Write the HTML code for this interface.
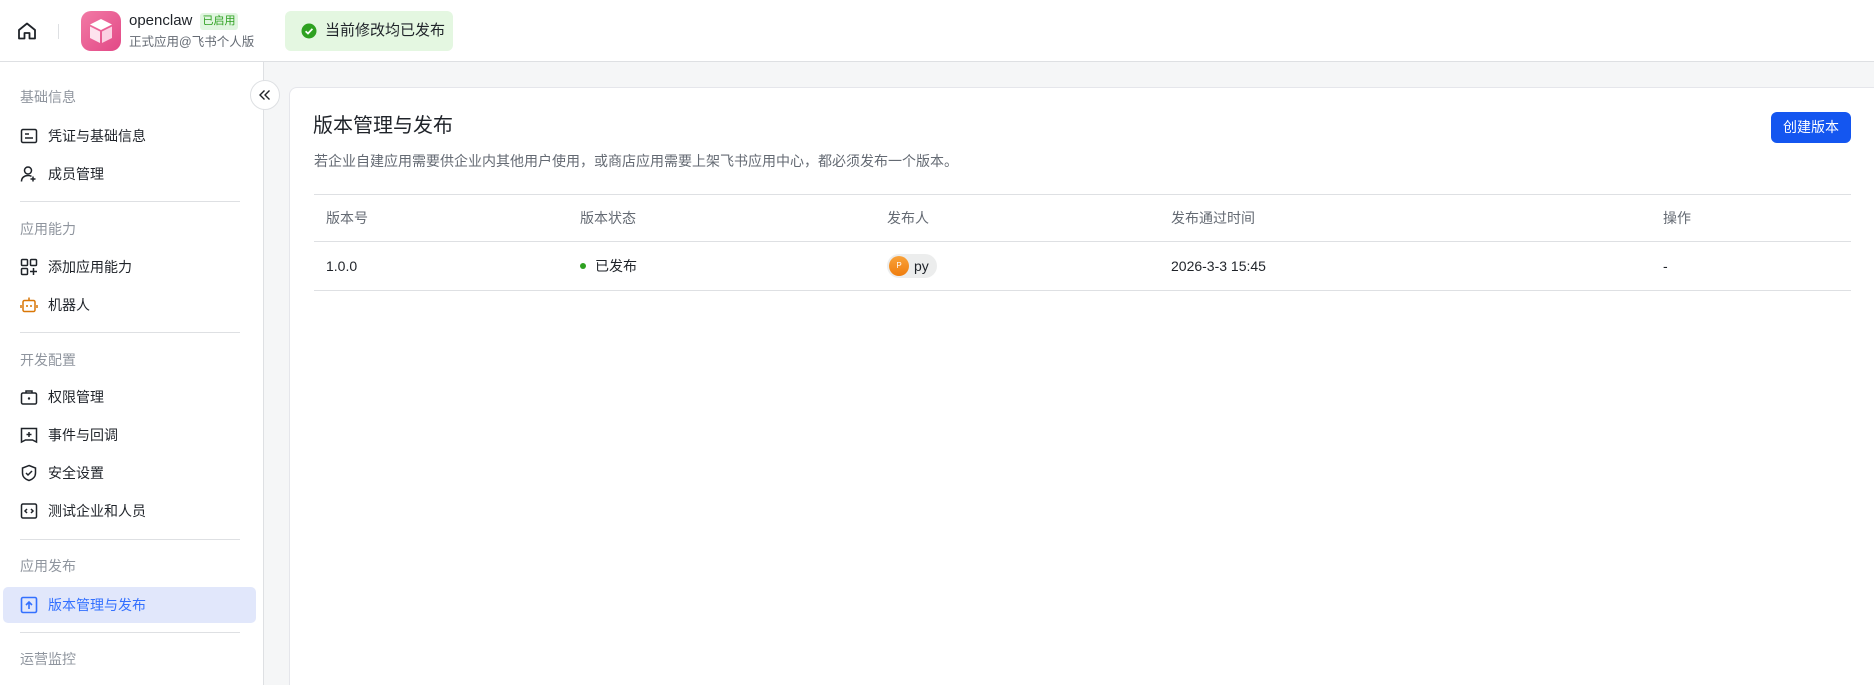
<!DOCTYPE html>
<html style="overflow:hidden;width:1874px;height:685px"><head><meta charset="utf-8"><style>
*{box-sizing:border-box;margin:0;padding:0}
body{width:1874px;height:685px;overflow:hidden;background:#f5f6f7;font-family:"Liberation Sans","Noto Sans CJK SC",sans-serif;color:#1f2329;position:relative}
.abs{position:absolute}
.hdr{left:0;top:0;width:1874px;height:62px;background:#fff;border-bottom:1px solid #dee0e3}
.side{left:0;top:62px;width:264px;height:623px;background:#fff;border-right:1px solid #dee0e3}
.sec{position:absolute;left:20px;font-size:14px;color:#8f959e;line-height:20px}
.it{position:absolute;left:48px;font-size:14px;color:#1f2329;line-height:20px}
.ic{position:absolute;left:20px;width:18px;height:18px}
.dv{position:absolute;left:20px;width:220px;height:1px;background:#dee0e3}
.card{left:289px;top:87px;width:1600px;height:598px;background:#fff;border:1px solid #e5e6eb;border-bottom:none;border-radius:8px 8px 0 0}
.th{position:absolute;top:208px;font-size:14px;color:#646a73;line-height:20px}
.td{position:absolute;top:256px;font-size:14px;color:#1f2329;line-height:20px}
.ln{position:absolute;left:314px;width:1537px;height:1px;background:#dee0e3}
</style></head><body>
<div class="abs hdr">
  <svg class="abs" style="left:17px;top:22px" width="20" height="18" viewBox="0 0 20 18"><path d="M2 8 L10 1.5 L18 8 V16.5 H12.5 V11 H7.5 V16.5 H2 Z" fill="none" stroke="#1f2329" stroke-width="1.8" stroke-linejoin="round"/></svg>
  <div class="abs" style="left:58px;top:24px;width:1px;height:15px;background:#dee0e3"></div>
  <div class="abs" style="left:81px;top:11px;width:40px;height:40px;border-radius:10px;background:linear-gradient(135deg,#f27aa5,#e24886)">
    <svg width="40" height="40" viewBox="0 0 40 40"><path d="M20 8 L31 13.5 L20 19 L9 13.5Z" fill="#fff"/><path d="M9 15.5 L19 20.5 V32 L9 27Z" fill="#fde3ee"/><path d="M31 15.5 L21 20.5 V32 L31 27Z" fill="#fbd0e2"/></svg>
  </div>
  <div class="abs" style="left:129px;top:11px;font-size:15px;line-height:20px;color:#1f2329">openclaw</div>
  <div class="abs" style="left:200px;top:13px;width:38px;height:17px;background:#e0f5df;border-radius:3px;color:#2ea121;font-size:11px;line-height:17px;text-align:center">已启用</div>
  <div class="abs" style="left:129px;top:33px;font-size:12.5px;line-height:18px;color:#646a73">正式应用@飞书个人版</div>
  <div class="abs" style="left:285px;top:11px;width:168px;height:40px;background:#e4f7e1;border-radius:6px">
    <svg class="abs" style="left:16px;top:12px" width="16" height="16" viewBox="0 0 16 16"><circle cx="8" cy="8" r="7.5" fill="#2ea121"/><path d="M4.6 8.2 L7 10.5 L11.4 5.9" fill="none" stroke="#fff" stroke-width="1.7"/></svg>
    <div class="abs" style="left:40px;top:10px;font-size:15px;line-height:20px">当前修改均已发布</div>
  </div>
</div>
<div class="abs side">
  <div class="sec" style="top:25px">基础信息</div>
  <svg class="ic" style="top:65px" viewBox="0 0 18 18"><rect x="1.5" y="2.5" width="15" height="13" rx="1.5" fill="none" stroke="#1f2329" stroke-width="1.5"/><path d="M5 7h4M5 11h8" stroke="#1f2329" stroke-width="1.5"/></svg>
  <div class="it" style="top:64px">凭证与基础信息</div>
  <svg class="ic" style="top:103px" viewBox="0 0 18 18"><circle cx="8" cy="5.5" r="3.5" fill="none" stroke="#1f2329" stroke-width="1.5"/><path d="M1.5 16.5c0-4 3-6 6.5-6 1.5 0 2.5.3 3.5.8M13 11.5v5M10.5 14h5" fill="none" stroke="#1f2329" stroke-width="1.5"/></svg>
  <div class="it" style="top:102px">成员管理</div>
  <div class="dv" style="top:139px"></div>
  <div class="sec" style="top:157px">应用能力</div>
  <svg class="ic" style="top:196px" viewBox="0 0 18 18"><g fill="none" stroke="#1f2329" stroke-width="1.5"><rect x="1.5" y="1.5" width="6" height="6" rx="1"/><rect x="10.5" y="1.5" width="6" height="6" rx="1"/><rect x="1.5" y="10.5" width="6" height="6" rx="1"/><path d="M13.5 10v7M10 13.5h7"/></g></svg>
  <div class="it" style="top:195px">添加应用能力</div>
  <svg class="ic" style="top:234px" viewBox="0 0 18 18"><g fill="none" stroke="#d97706" stroke-width="1.5"><rect x="3" y="4.5" width="12" height="11" rx="1.5"/><path d="M9 1.5v3M1 9v3M17 9v3"/></g><circle cx="7" cy="10" r="1" fill="#d97706"/><circle cx="11" cy="10" r="1" fill="#d97706"/></svg>
  <div class="it" style="top:233px">机器人</div>
  <div class="dv" style="top:270px"></div>
  <div class="sec" style="top:288px">开发配置</div>
  <svg class="ic" style="top:326px" viewBox="0 0 18 18"><g fill="none" stroke="#1f2329" stroke-width="1.5"><rect x="1.5" y="5" width="15" height="11" rx="1.5"/><path d="M6 5V3h6v2"/></g><circle cx="9" cy="10.5" r="1.2" fill="#1f2329"/></svg>
  <div class="it" style="top:325px">权限管理</div>
  <svg class="ic" style="top:364px" viewBox="0 0 18 18"><g fill="none" stroke="#1f2329" stroke-width="1.5"><path d="M1.5 2.5h15v13.5l-4-2h-7l-4 2z"/><path d="M9 6v5M6.5 8.5h5"/></g></svg>
  <div class="it" style="top:363px">事件与回调</div>
  <svg class="ic" style="top:402px" viewBox="0 0 18 18"><g fill="none" stroke="#1f2329" stroke-width="1.5"><path d="M9 1.5l6.5 2.5v5c0 4-3 6.5-6.5 7.5C5.5 15.5 2.5 13 2.5 9V4z"/><path d="M6 9l2 2 4-4"/></g></svg>
  <div class="it" style="top:401px">安全设置</div>
  <svg class="ic" style="top:440px" viewBox="0 0 18 18"><g fill="none" stroke="#1f2329" stroke-width="1.5"><rect x="1.5" y="2" width="15" height="14" rx="1.5"/><path d="M7 7l-2 2 2 2M11 7l2 2-2 2"/></g></svg>
  <div class="it" style="top:439px">测试企业和人员</div>
  <div class="dv" style="top:477px"></div>
  <div class="sec" style="top:494px">应用发布</div>
  <div class="abs" style="left:3px;top:525px;width:253px;height:36px;background:#e1e7fb;border-radius:5px"></div>
  <svg class="ic" style="top:534px" viewBox="0 0 18 18"><g fill="none" stroke="#3370ff" stroke-width="1.6"><rect x="1.5" y="1.5" width="15" height="15" rx="1.5"/><path d="M9 13V6M6 9l3-3 3 3"/></g></svg>
  <div class="it" style="top:533px;color:#3370ff">版本管理与发布</div>
  <div class="dv" style="top:570px"></div>
  <div class="sec" style="top:587px">运营监控</div>
</div>
<div class="abs" style="left:250px;top:80px;width:30px;height:30px;border-radius:50%;background:#fff;border:1px solid #dee0e3;text-align:center">
<svg width="14" height="12" viewBox="0 0 14 12" style="margin-top:8px"><path d="M6.5 1.5L2 6l4.5 4.5M11.5 1.5L7 6l4.5 4.5" fill="none" stroke="#1f2329" stroke-width="1.4"/></svg></div>
<div class="abs card"></div>
<div class="abs" style="left:313px;top:112px;font-size:20px;line-height:28px;color:#1f2329">版本管理与发布</div>
<div class="abs" style="left:314px;top:151px;font-size:14px;line-height:20px;color:#646a73">若企业自建应用需要供企业内其他用户使用，或商店应用需要上架飞书应用中心，都必须发布一个版本。</div>
<div class="abs" style="left:1771px;top:112px;width:80px;height:31px;background:#1456f0;border-radius:6px;color:#fff;font-size:14px;line-height:31px;text-align:center">创建版本</div>
<div class="ln" style="top:194px"></div>
<div class="ln" style="top:241px"></div>
<div class="ln" style="top:290px"></div>
<div class="th" style="left:326px">版本号</div>
<div class="th" style="left:580px">版本状态</div>
<div class="th" style="left:887px">发布人</div>
<div class="th" style="left:1171px">发布通过时间</div>
<div class="th" style="left:1663px">操作</div>
<div class="td" style="left:326px">1.0.0</div>
<div class="abs" style="left:580px;top:263px;width:6px;height:6px;border-radius:50%;background:#2ea121"></div>
<div class="td" style="left:595px">已发布</div>
<div class="abs" style="left:887px;top:254px;width:50px;height:24px;border-radius:12px;background:#eceded">
  <div class="abs" style="left:2px;top:2px;width:20px;height:20px;border-radius:50%;background:linear-gradient(#f9a23a,#ef7d0e);color:#fff;font-size:8px;line-height:20px;text-align:center">P</div>
  <div class="abs" style="left:27px;top:2px;font-size:14px;line-height:20px">py</div>
</div>
<div class="td" style="left:1171px">2026-3-3 15:45</div>
<div class="td" style="left:1663px">-</div>
</body></html>
